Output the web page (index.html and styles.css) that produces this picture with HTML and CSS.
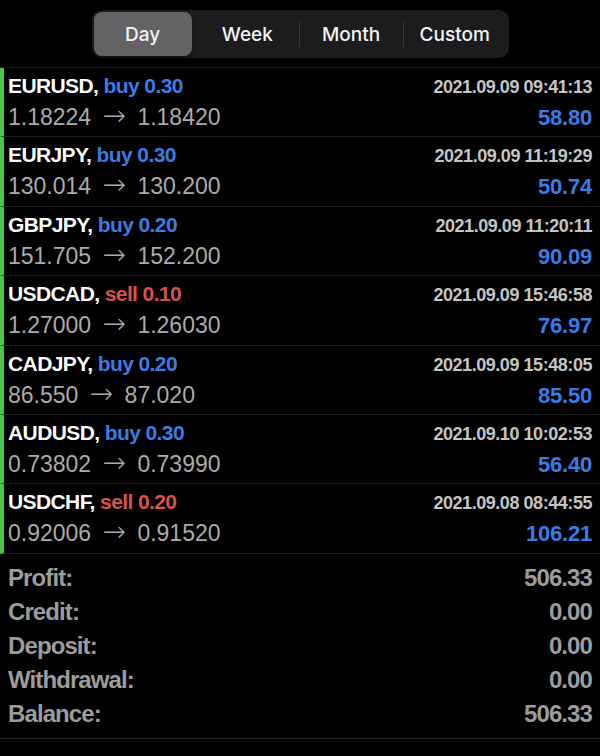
FILE: index.html
```html
<!DOCTYPE html>
<html lang="en">
<head>
    <meta charset="UTF-8">
    <meta name="viewport" content="width=device-width, initial-scale=1.0">
    <title>History</title>
    <link rel="stylesheet" href="styles.css">
</head>
<body>
    <div class="period-bar">
        <div class="segment">
            <div class="seg-item active">Day</div>
            <div class="seg-item">Week</div>
            <div class="seg-item sep">Month</div>
            <div class="seg-item sep">Custom</div>
        </div>
    </div>

    <div class="trades">
        <div class="trade">
            <div class="line top">
                <span class="symbol">EURUSD, <span class="buy">buy 0.30</span></span>
                <span class="time">2021.09.09 09:41:13</span>
            </div>
            <div class="line">
                <span class="prices">1.18224 <span class="arrow">→</span> 1.18420</span>
                <span class="profit">58.80</span>
            </div>
        </div>
        <div class="trade">
            <div class="line top">
                <span class="symbol">EURJPY, <span class="buy">buy 0.30</span></span>
                <span class="time">2021.09.09 11:19:29</span>
            </div>
            <div class="line">
                <span class="prices">130.014 <span class="arrow">→</span> 130.200</span>
                <span class="profit">50.74</span>
            </div>
        </div>
        <div class="trade">
            <div class="line top">
                <span class="symbol">GBPJPY, <span class="buy">buy 0.20</span></span>
                <span class="time">2021.09.09 11:20:11</span>
            </div>
            <div class="line">
                <span class="prices">151.705 <span class="arrow">→</span> 152.200</span>
                <span class="profit">90.09</span>
            </div>
        </div>
        <div class="trade">
            <div class="line top">
                <span class="symbol">USDCAD, <span class="sell">sell 0.10</span></span>
                <span class="time">2021.09.09 15:46:58</span>
            </div>
            <div class="line">
                <span class="prices">1.27000 <span class="arrow">→</span> 1.26030</span>
                <span class="profit">76.97</span>
            </div>
        </div>
        <div class="trade">
            <div class="line top">
                <span class="symbol">CADJPY, <span class="buy">buy 0.20</span></span>
                <span class="time">2021.09.09 15:48:05</span>
            </div>
            <div class="line">
                <span class="prices">86.550 <span class="arrow">→</span> 87.020</span>
                <span class="profit">85.50</span>
            </div>
        </div>
        <div class="trade">
            <div class="line top">
                <span class="symbol">AUDUSD, <span class="buy">buy 0.30</span></span>
                <span class="time">2021.09.10 10:02:53</span>
            </div>
            <div class="line">
                <span class="prices">0.73802 <span class="arrow">→</span> 0.73990</span>
                <span class="profit">56.40</span>
            </div>
        </div>
        <div class="trade">
            <div class="line top">
                <span class="symbol">USDCHF, <span class="sell">sell 0.20</span></span>
                <span class="time">2021.09.08 08:44:55</span>
            </div>
            <div class="line">
                <span class="prices">0.92006 <span class="arrow">→</span> 0.91520</span>
                <span class="profit">106.21</span>
            </div>
        </div>
    </div>

    <div class="summary">
        <div class="sum-row"><span>Profit:</span><span>506.33</span></div>
        <div class="sum-row"><span>Credit:</span><span>0.00</span></div>
        <div class="sum-row"><span>Deposit:</span><span>0.00</span></div>
        <div class="sum-row"><span>Withdrawal:</span><span>0.00</span></div>
        <div class="sum-row"><span>Balance:</span><span>506.33</span></div>
    </div>
</body>
</html>
```

FILE: styles.css
```css
* {
    margin: 0;
    padding: 0;
    box-sizing: border-box;
}

body {
    background: #000;
    color: #fff;
    font-family: 'Liberation Sans', Arial, sans-serif;
    width: 600px;
}

/* period switcher */
.period-bar {
    display: flex;
    justify-content: center;
    padding-top: 10px;
    padding-bottom: 9px;
}

.segment {
    display: flex;
    width: 417px;
    height: 48px;
    padding: 2px;
    background: #1c1c1e;
    border-radius: 10px;
}

.seg-item {
    flex: 1;
    display: flex;
    align-items: center;
    justify-content: center;
    position: relative;
    font-family: 'Inter', 'Roboto', sans-serif;
    font-weight: 500;
    font-size: 19px;
    color: #f2f2f2;
}

.seg-item.active {
    flex: 0 0 98px;
    margin-right: 4px;
    background: #636366;
    border-radius: 8px;
    box-shadow: 0 2px 4px rgba(0, 0, 0, 0.4);
}

.seg-item.sep::before {
    content: "";
    position: absolute;
    left: 0;
    top: 9px;
    bottom: 9px;
    width: 1px;
    background: #3a3a3c;
}

/* trade list */
.trades {
    border-top: 1px solid #1f1f1f;
}

.trade {
    height: 69.4px;
    padding: 2px 8px 0 4px;
    border-left: 4px solid #4cc34c;
    border-bottom: 1px solid #1f1f1f;
}

.line {
    display: flex;
    justify-content: space-between;
    align-items: baseline;
    height: 32px;
    line-height: 32px;
}

.line.top {
    height: 31px;
    line-height: 31px;
}

.symbol {
    font-weight: 700;
    font-size: 21px;
    letter-spacing: -0.6px;
    color: #fff;
}

.buy {
    color: #3a7ce6;
}

.sell {
    color: #d8524a;
}

.time {
    font-weight: 700;
    font-size: 18px;
    letter-spacing: -0.45px;
    color: #c4c4c4;
}

.prices {
    font-size: 23px;
    color: #ababab;
}

.arrow {
    display: inline-block;
    margin: 0 5px;
    font-family: 'DejaVu Sans', sans-serif;
    font-weight: 200;
    font-size: 28px;
    line-height: 20px;
}

.profit {
    font-weight: 700;
    font-size: 22px;
    letter-spacing: -0.2px;
    color: #3a7ce6;
}

/* totals */
.summary {
    padding: 7px 8px;
    border-bottom: 1px solid #222;
}

.sum-row {
    display: flex;
    justify-content: space-between;
    height: 34px;
    line-height: 34px;
    font-weight: 700;
    font-size: 24px;
    letter-spacing: -0.9px;
    color: #9c9c9c;
}
```
